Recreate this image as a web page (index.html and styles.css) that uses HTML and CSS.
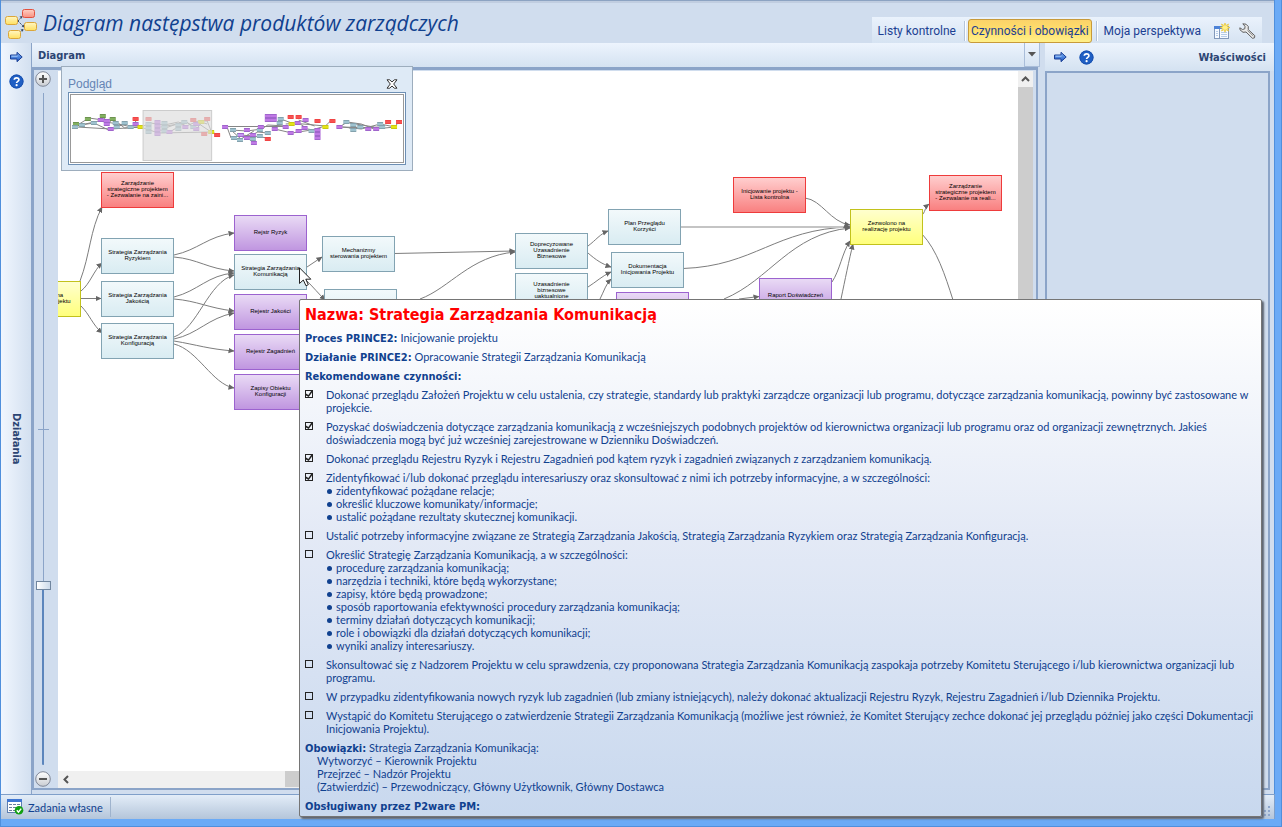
FILE: index.html
```html
<!DOCTYPE html>
<html lang="pl">
<head>
<meta charset="utf-8">
<title>Diagram następstwa produktów zarządczych</title>
<link rel="stylesheet" href="styles.css">
</head>
<body>
<svg class="defs" aria-hidden="true">
  <defs>
    <linearGradient id="gBlue" x1="0" y1="0" x2="0" y2="1"><stop offset="0" stop-color="#7fb2f5"/><stop offset="1" stop-color="#1c57c4"/></linearGradient>
    <linearGradient id="gYellow" x1="0" y1="0" x2="0" y2="1"><stop offset="0" stop-color="#fff6c4"/><stop offset="1" stop-color="#ffe060"/></linearGradient>
    <linearGradient id="gRed" x1="0" y1="0" x2="0" y2="1"><stop offset="0" stop-color="#ffd0c4"/><stop offset="1" stop-color="#f89080"/></linearGradient>
    <linearGradient id="gKnob" x1="0" y1="0" x2="0" y2="1"><stop offset="0" stop-color="#ffffff"/><stop offset="1" stop-color="#c9ccd2"/></linearGradient>
    <marker id="arrow" viewBox="0 0 6 6" refX="5.5" refY="3" markerWidth="6" markerHeight="6" markerUnits="userSpaceOnUse" orient="auto"><path d="M0 0.2L6 3L0 5.8z" fill="#666"/></marker>
    <symbol id="iArrow" viewBox="0 0 15 12"><path d="M1.500 4h6.500V1.300L13.200 6L8 10.700V8H1.500z" fill="url(#gBlue)" stroke="#1a3f94" stroke-width="1"/><path d="M2.500 5.200h6" stroke="#a8cdfb" stroke-width="1"/></symbol>
    <symbol id="iHelp" viewBox="0 0 15 15"><circle cx="7.500" cy="7.500" r="7" fill="#1f5fc4"/><circle cx="7.500" cy="7.500" r="6.500" fill="none" stroke="#1a52b0"/><path d="M5.300 5.800C5.300 3.200 9.900 3.100 9.900 5.700C9.900 7.300 7.600 7.400 7.600 9" fill="none" stroke="#fff" stroke-width="1.700"/><circle cx="7.600" cy="11.200" r="1.100" fill="#fff"/></symbol>
  </defs>
</svg>

<div class="window">
  <header class="header">
    <svg class="logo" viewBox="0 0 34 32" aria-hidden="true">
      <g stroke="#3d4f66" stroke-width="1" fill="#3d4f66"><path d="M13 12L17 7.500M13 12L19 18M14 24L18 20.500" stroke-dasharray="2 1" fill="none"/><path d="M17.500 7l-3 .6 2.400 2.200zM19.500 18.500l-.6-3-2.200 2.200zM18.500 20l-3 .6 2.400 2.200z" stroke="none"/></g>
      <rect x="17.500" y="0.500" width="12" height="8" rx="2" fill="url(#gRed)" stroke="#e2513f"/>
      <rect x="0.500" y="7.500" width="12" height="8" rx="2" fill="url(#gYellow)" stroke="#dba63a"/>
      <rect x="19.500" y="13.500" width="12" height="8" rx="2" fill="url(#gYellow)" stroke="#dba63a"/>
      <rect x="3.500" y="21.500" width="12" height="8" rx="2" fill="url(#gYellow)" stroke="#dba63a"/>
    </svg>
    <h1 class="title">Diagram następstwa produktów zarządczych</h1>
    <nav class="toolbar">
      <button class="tool">Listy kontrolne</button>
      <span class="sep"></span>
      <button class="tool active">Czynności i obowiązki</button>
      <span class="sep"></span>
      <button class="tool">Moja perspektywa</button>
      <button class="tool-icon" aria-label="Nowa perspektywa">
        <svg viewBox="0 0 16 16" width="16" height="16"><rect x="0.500" y="3.500" width="14" height="12" fill="#f6faff" stroke="#8298ba"/><rect x="0" y="3" width="8" height="3" fill="#4d83d8"/><path d="M2 8.500h2M2 10.500h2M2 12.500h2M7 9.500h6M7 11.500h6M7 13.500h6" stroke="#b5cbe8"/><path d="M5.500 6v9" stroke="#8298ba"/><path d="M11 0l.8 2.600L14.500 1 13.400 3.700 16 4.500l-2.600.9L14.500 8 11.800 6.600 11 9.200l-.8-2.600L7.500 8l1.200-2.600L6 4.500l2.700-.8L7.500 1l2.700 1.600z" fill="#fff08a" stroke="#e6c22e" stroke-width=".7"/></svg>
      </button>
      <button class="tool-icon" aria-label="Ustawienia">
        <svg viewBox="0 0 17 16" width="17" height="16"><path d="M3.800 .8L7 1.200 9.300 3.500 9.200 6.500 15.800 12.700 15.500 14.800 13.500 15.300 7 9 4 9.300 1 6.800 .8 4.800 3.500 6.500 5.800 5.800 6 3.300z" fill="#e8e8e8" stroke="#606060" stroke-width="1"/><path d="M8.500 7.500l5.800 5.500" stroke="#8d8d8d"/></svg>
      </button>
    </nav>
  </header>

  <div class="main">
    <aside class="rail">
      <button class="icon-btn" aria-label="Rozwiń"><svg width="15" height="12"><use href="#iArrow"/></svg></button>
      <button class="icon-btn" aria-label="Pomoc"><svg width="15" height="15"><use href="#iHelp"/></svg></button>
      <span class="rail-label">Działania</span>
    </aside>

    <section class="center">
      <div class="pane-head">
        <h2 class="pane-title">Diagram</h2>
        <button class="drop" aria-label="Menu diagramu"><svg width="8" height="5"><path d="M0 0h8L4 4.500z" fill="#555"/></svg></button>
      </div>
      <div class="frame">
        <div class="zoom">
          <button class="knob" aria-label="Powiększ"><svg width="16" height="16"><circle cx="8" cy="8" r="7.300" fill="url(#gKnob)" stroke="#808898"/><path d="M4 8h8M8 4v8" stroke="#555" stroke-width="2"/></svg></button>
          <div class="slider-box"><input class="slider" type="range" min="0" max="1000" value="264" aria-label="Skala"></div>
          <button class="knob" aria-label="Pomniejsz"><svg width="16" height="16"><circle cx="8" cy="8" r="7.300" fill="url(#gKnob)" stroke="#808898"/><path d="M4 8h8" stroke="#555" stroke-width="2"/></svg></button>
        </div>
        <div class="canvas">
          <svg class="edges" aria-hidden="true">
            <g transform="translate(-58 -71)" fill="none" stroke="#7d7d7d">
              <g class="edge">
                <path d="M80 281C90 255 90 230 102 207"/>
                <path d="M81 291C90 284 94 270 102 263"/>
                <path d="M81 298.500H101"/>
                <path d="M81 306C90 315 92 324 102 333"/>
                <path d="M174 255C198 250 208 236 234 233"/>
                <path d="M174 257C198 259 208 269 234 271"/>
                <path d="M174 297C198 291 208 275 234 273"/>
                <path d="M174 299C198 301 208 308 234 311"/>
                <path d="M174 337C198 328 208 282 234 275"/>
                <path d="M174 339C198 334 208 318 234 313"/>
                <path d="M174 341C198 345 208 349 234 351"/>
                <path d="M174 344C198 350 212 384 234 388"/>
                <path d="M307 267L322 257"/>
                <path d="M307 281C314 288 318 293 325 300"/>
                <path d="M394 253.500L515 251"/>
                <path d="M420 299C450 288 470 256 515 252"/>
                <path d="M588 246C596 240 600 234 608 231"/>
                <path d="M588 253C596 260 602 264 611 267"/>
                <path d="M588 287C596 282 602 276 611 272"/>
                <path d="M600 299C604 291 606 284 611 279"/>
                <path d="M681 227H850"/>
                <path d="M683 268.500C755 266 775 229 850 227"/>
                <path d="M805 198C822 200 830 222 850 225"/>
                <path d="M724 299C770 280 790 234 850 228"/>
                <path d="M739 299L759 296.500"/>
                <path d="M832 282C840 270 842 253 850 241"/>
                <path d="M841 299C845 280 849 260 853 244"/>
                <path d="M921 216C926 212 924 208 929 204"/>
              </g>
              <path d="M922 234C937 250 945 275 953 300"/>
              <path d="M681 227H843" stroke="#c4c4c4" stroke-width="2"/>
            </g>
          </svg>
          <div class="node yellow" style="left:-50px;top:210px">Zezwolono na<br>inicjowanie projektu</div>
          <div class="node red" style="left:43px;top:101px">Zarządzanie<br>strategiczne projektem<br>- Zezwalanie na zaini...</div>
          <div class="node blue" style="left:43px;top:167px">Strategia Zarządzania<br>Ryzykiem</div>
          <div class="node blue" style="left:43px;top:210px">Strategia Zarządzania<br>Jakością</div>
          <div class="node blue" style="left:43px;top:252px">Strategia Zarządzania<br>Konfiguracją</div>
          <div class="node violet" style="left:176px;top:144px">Rejstr Ryzyk</div>
          <div class="node blue" style="left:176px;top:183px">Strategia Zarządzania<br>Komunikacją</div>
          <div class="node violet" style="left:176px;top:223px">Rejestr Jakości</div>
          <div class="node violet" style="left:176px;top:263px">Rejestr Zagadnień</div>
          <div class="node violet" style="left:176px;top:303px">Zapisy Obiektu<br>Konfiguracji</div>
          <div class="node blue" style="left:264px;top:165px">Mechanizmy<br>sterowania projektem</div>
          <div class="node blue" style="left:266px;top:218px"></div>
          <div class="node blue" style="left:457px;top:162px">Doprecyzowane<br>Uzasadnienie<br>Biznesowe</div>
          <div class="node blue" style="left:457px;top:202px">Uzasadnienie<br>biznesowe<br>uaktualnione</div>
          <div class="node blue" style="left:550px;top:138px">Plan Przeglądu<br>Korzyści</div>
          <div class="node blue" style="left:553px;top:181px">Dokumentacja<br>Inicjowania Projektu</div>
          <div class="node violet" style="left:558px;top:221px"></div>
          <div class="node red" style="left:675px;top:106px">Inicjowanie projektu -<br>Lista kontrolna</div>
          <div class="node violet" style="left:701px;top:207px">Raport Doświadczeń</div>
          <div class="node yellow" style="left:792px;top:138px">Zezwolono na<br>realizację projektu</div>
          <div class="node red" style="left:871px;top:104px">Zarządzanie<br>strategiczne projektem<br>- Zezwalanie na reali...</div>
          <svg class="cursor" width="13" height="20" viewBox="0 0 13 20" aria-hidden="true"><path d="M.5 .8V16.500L4.300 13L7 18.800L9.300 17.700L6.800 12.200H11.800z" fill="#fff" stroke="#222"/></svg>
        </div>
        <div class="vscroll"><span class="sbtn"><svg width="9" height="6"><path d="M1 5L4.500 1.500L8 5" fill="none" stroke="#555" stroke-width="2"/></svg></span><span class="vthumb"></span></div>
        <div class="hscroll"><span class="sbtn"><svg width="6" height="9"><path d="M5 1L1.500 4.500L5 8" fill="none" stroke="#555" stroke-width="2"/></svg></span><span class="hthumb"></span></div>
      </div>
      <div class="preview">
        <div class="preview-head"><h3 class="preview-title">Podgląd</h3>
          <button class="close" aria-label="Zamknij"><svg width="12" height="10"><path d="M1 .8h2.700L6 3 8.300 .8H11L7.700 5 11 9.200H8.300L6 7 3.700 9.200H1L4.300 5z" fill="#fff" stroke="#333"/></svg></button></div>
        <div class="map">
          <svg viewBox="70 95 334 67" preserveAspectRatio="none" aria-hidden="true">
            <defs>
              <g id="mapNodes" fill="none">
                <path class="mg" d="M72 124h6M84 119h6M99 116h6M109 119h6"/>
                <path class="mb" d="M71 127h6M78 125h6M90 123h6M112 123h6M121 123h6M113 127h6M127 127h6M145 124h6M145 128h6M145 132h6M161 123h6M161 127h6M161 131h6M181 122h6M175 125h6M175 129h6M190 127h6M230 130h6M231 138h6M237 135h6M237 140h6M250 139h6M257 130h6M257 136h6M265 133h6M277 123h6M278 119h6M309 131h6M344 122h6M351 125h6M351 130h6M358 127h6M378 124h6M380 127h6"/>
                <path class="mv" d="M97 120h6M103 124h6M107 129h6M103 121h6M132 124h6M154 122h6M154 126h6M154 130h6M154 134h6M166 132h6M182 127h6M193 129h6M193 124h6M222 127h6M238 135h6M244 130h6M244 138h6M250 135h6M251 143h6M258 127h6M272 129h6M283 127h6M265 116h6M265 120h6M271 116h6M271 120h6M295 123h6M303 120h6M288 133h6M296 131h6M302 128h6M315 130h6M315 134h6M315 138h6M337 127h6M366 129h6M374 129h6"/>
                <path class="mr" d="M132 119h6M145 119h6M190 120h6M204 119h6M201 134h6M214 135h6M288 117h6M296 117h6M315 121h6M330 121h6M265 139h6M386 122h6M397 122h6"/>
                <path class="my" d="M137 127h6M198 122h6M208 132h6M289 124h6M323 127h6M392 127h6"/>
              </g>
            </defs>
            <g fill="none" stroke="#858585">
              <path d="M75 126L88 118L102 120L112 119L124 128L142 127M75 126L98 121L118 124L131 127L142 127M76 127L110 129L142 127M80 125L93 123L108 130L118 127M102 116L108 124L112 117M135 119V124L142 127M110 129L127 123"/>
              <path d="M143 126L150 123L164 125L178 122L186 126L198 121L207 124M143 128L158 133L211 132L196 122M160 127L178 124L186 122L192 126L201 121M158 130L171 131L184 123M165 128L185 121L196 129L203 121L207 121L211 131L217 135"/>
              <path d="M225 126.500H285M227 127L231 138L240 135L254 136L268 138M231 130L247 131L262 129L268 125L286 126M232 131L241 139L254 131M244 139L258 132L268 133M275 129L292 133L312 130L326 126M281 119L292 123L326 126L332 120M286 124L299 123L308 129L320 131M299 120L315 126"/>
              <path d="M340 127L348 122L362 124L375 129L396 127L400 121M343 127L362 129L381 124L396 127M340 127L385 128M350 123L375 127M350 128L381 127"/>
            </g>
            <use class="map-fill" href="#mapNodes"/>
            <use class="map-line" href="#mapNodes"/>
            <rect x="142.500" y="110.500" width="69" height="50" fill="#ddd" fill-opacity=".68" stroke="#ccc"/>
          </svg>
        </div>
      </div>
    </section>

    <aside class="props">
      <div class="props-head">
        <button class="icon-btn" aria-label="Zwiń"><svg width="15" height="12"><use href="#iArrow"/></svg></button>
        <button class="icon-btn" aria-label="Pomoc"><svg width="15" height="15"><use href="#iHelp"/></svg></button>
        <h2 class="props-title">Właściwości</h2>
      </div>
      <div class="props-body"></div>
    </aside>
  </div>

  <footer class="status">
    <button class="task"><svg width="17" height="16" viewBox="0 0 17 16"><rect x="0.500" y="0.500" width="14" height="13" fill="#fff" stroke="#5e7eae"/><rect x="0" y="0" width="15" height="3" fill="#3f76d2"/><path d="M2 5.500h3M6 5.500h3M10 5.500h3M2 8.500h3M6 8.500h3M10 8.500h3M2 11.500h3M6 11.500h3" stroke="#6c7f9e"/><circle cx="12" cy="11.300" r="4.300" fill="#12a012"/><path d="M9.800 11.300l1.700 1.800 2.700-3.500" fill="none" stroke="#fff" stroke-width="1.500"/></svg>Zadania własne</button>
    <svg class="grip" width="9" height="11"><path d="M6 0h2v2H6zM6 4h2v2H6zM2 4h2v2H2zM6 8h2v2H6zM2 8h2v2H2z" fill="#8da6cc"/></svg>
  </footer>
</div>

<article class="tip">
  <h2 class="tip-title">Nazwa: Strategia Zarządzania Komunikacją</h2>
  <p class="line"><b>Proces PRINCE2:</b> Inicjowanie projektu</p>
  <p class="line"><b>Działanie PRINCE2:</b> Opracowanie Strategii Zarządzania Komunikacją</p>
  <p class="line"><b>Rekomendowane czynności:</b></p>
  <ul class="checks">
    <li><input type="checkbox" id="c1" checked><label for="c1">Dokonać przeglądu Założeń Projektu w celu ustalenia, czy strategie, standardy lub praktyki zarządcze organizacji lub programu, dotyczące zarządzania komunikacją, powinny być zastosowane w<br>projekcie.</label></li>
    <li><input type="checkbox" id="c2" checked><label for="c2">Pozyskać doświadczenia dotyczące zarządzania komunikacją z wcześniejszych podobnych projektów od kierownictwa organizacji lub programu oraz od organizacji zewnętrznych. Jakieś<br>doświadczenia mogą być już wcześniej zarejestrowane w Dzienniku Doświadczeń.</label></li>
    <li><input type="checkbox" id="c3" checked><label for="c3">Dokonać przeglądu Rejestru Ryzyk i Rejestru Zagadnień pod kątem ryzyk i zagadnień związanych z zarządzaniem komunikacją.</label></li>
    <li><input type="checkbox" id="c4" checked><div><label for="c4">Zidentyfikować i/lub dokonać przeglądu interesariuszy oraz skonsultować z nimi ich potrzeby informacyjne, a w szczególności:</label>
      <ul class="dots"><li>zidentyfikować pożądane relacje;</li><li>określić kluczowe komunikaty/informacje;</li><li>ustalić pożądane rezultaty skutecznej komunikacji.</li></ul></div></li>
    <li><input type="checkbox" id="c5"><label for="c5">Ustalić potrzeby informacyjne związane ze Strategią Zarządzania Jakością, Strategią Zarządzania Ryzykiem oraz Strategią Zarządzania Konfiguracją.</label></li>
    <li><input type="checkbox" id="c6"><div><label for="c6">Określić Strategię Zarządzania Komunikacją, a w szczególności:</label>
      <ul class="dots"><li>procedurę zarządzania komunikacją;</li><li>narzędzia i techniki, które będą wykorzystane;</li><li>zapisy, które będą prowadzone;</li><li>sposób raportowania efektywności procedury zarządzania komunikacją;</li><li>terminy działań dotyczących komunikacji;</li><li>role i obowiązki dla działań dotyczących komunikacji;</li><li>wyniki analizy interesariuszy.</li></ul></div></li>
    <li><input type="checkbox" id="c7"><label for="c7">Skonsultować się z Nadzorem Projektu w celu sprawdzenia, czy proponowana Strategia Zarządzania Komunikacją zaspokaja potrzeby Komitetu Sterującego i/lub kierownictwa organizacji lub<br>programu.</label></li>
    <li><input type="checkbox" id="c8"><label for="c8">W przypadku zidentyfikowania nowych ryzyk lub zagadnień (lub zmiany istniejących), należy dokonać aktualizacji Rejestru Ryzyk, Rejestru Zagadnień i/lub Dziennika Projektu.</label></li>
    <li><input type="checkbox" id="c9"><label for="c9">Wystąpić do Komitetu Sterującego o zatwierdzenie Strategii Zarządzania Komunikacją (możliwe jest również, że Komitet Sterujący zechce dokonać jej przeglądu później jako części Dokumentacji<br>Inicjowania Projektu).</label></li>
  </ul>
  <div class="duties"><p><b>Obowiązki:</b> Strategia Zarządzania Komunikacją:</p>
    <ul class="roles"><li>Wytworzyć – Kierownik Projektu</li><li>Przejrzeć – Nadzór Projektu</li><li>(Zatwierdzić) – Przewodniczący, Główny Użytkownik, Główny Dostawca</li></ul></div>
  <p class="line"><b>Obsługiwany przez P2ware PM:</b></p>
</article>
</body>
</html>
```
FILE: styles.css
```css
* { box-sizing: border-box; }
body, h1, h2, h3, p, ul { margin: 0; padding: 0; }
ul { list-style: none; }
button { margin: 0; padding: 0; border: 0; background: none; font: inherit; color: inherit; }
svg { display: block; }
.defs { position: absolute; width: 0; height: 0; }

body {
  height: 100vh;
  overflow: hidden;
  position: relative;
  background: #6aaaf6;
  font: 11px/13px Lato, "Noto Sans", sans-serif;
  color: #10418f;
}
.window {
  height: 100vh;
  display: flex;
  flex-direction: column;
  border: solid #4f8fdc;
  border-width: 0 1px 1px;
  padding: 0 6px 7px 0;
}

/* header */
.header {
  flex: none;
  height: 43px;
  display: flex;
  align-items: center;
  gap: 4px;
  padding: 3px 12px 0 4px;
  background: #d0ddee;
  border-right: 1px solid #4f8fdc;
  box-shadow: inset 0 1px #8ca3c2, inset 0 3px #c0cde0;
}
.logo { width: 34px; height: 32px; margin-top: 3px; }
.title { flex: 1; font: italic 21px/28px "Open Sans", sans-serif; color: #10418f; }
.toolbar {
  align-self: flex-end;
  display: flex;
  align-items: center;
  height: 26px;
  padding: 1px 6px 0 2px;
  background: linear-gradient(#eaf2fc, #d6e3f2);
  font: 12px/16px Roboto, sans-serif;
  color: #1c3f92;
}
.tool { height: 24px; padding: 0 4px; }
.tool.active {
  padding: 0 2px;
  border: 1px solid #c79a3b;
  border-radius: 3px;
  background: linear-gradient(#fbd269, #ffe06c 50%, #fff08a);
}
.sep { width: 2px; height: 20px; margin: 0 2px 0 4px; background: linear-gradient(90deg, #b4c4da 50%, #fff 50%); }
.tool-icon { margin-left: 9px; }

/* main area */
.main { flex: 1; min-height: 0; display: flex; background: #d0ddee; border-right: 1px solid #4f8fdc; }
.rail {
  flex: none;
  width: 31px;
  display: flex;
  flex-direction: column;
  align-items: center;
  gap: 11px;
  padding-top: 8px;
  background: linear-gradient(90deg, #f0f6fe, #d3e0f0);
  border-right: 1px solid #8ba4c8;
}
.icon-btn { display: flex; align-items: center; }
.rail-label { margin: auto 0; padding-bottom: 32px; padding-top: 16px; writing-mode: vertical-rl; font: bold 11px/14px "DejaVu Sans Condensed", sans-serif; color: #2c4573; }
.center { flex: 1; min-width: 0; position: relative; display: flex; flex-direction: column; padding-bottom: 4px; }
.pane-head {
  flex: none;
  height: 24px;
  display: flex;
  align-items: center;
  justify-content: space-between;
  padding-left: 6px;
  background: linear-gradient(#edf4fd, #d4e2f1);
}
.pane-title, .props-title { padding-top: 1px; font: bold 11px/14px "DejaVu Sans Condensed", sans-serif; color: #2c4573; }
.drop { align-self: stretch; width: 16px; display: grid; place-items: center; border: solid #a9bdd9; border-width: 0 1px 1px; }
.frame {
  flex: 1;
  min-height: 0;
  margin-right: 2px;
  display: grid;
  grid-template: 1fr 17px / 24px 1fr 15px;
  border: 2px solid #8ba4c8;
  border-top-width: 3px;
  padding: 1px 3px 0 0;
}
.zoom { grid-row: 1 / 3; display: flex; flex-direction: column; align-items: center; gap: 6px; padding: 0 6px 1px 0; }
.knob { flex: none; }
.slider-box { flex: 1; min-height: 0; display: flex; }
.slider {
  writing-mode: vertical-lr;
  direction: rtl;
  appearance: none;
  width: 15px;
  height: 100%;
  margin: 0;
  background:
    linear-gradient(#8ba4c8, #8ba4c8) center / 11px 1px no-repeat,
    linear-gradient(#5c86bd, #5c86bd) bottom / 2px 26% no-repeat,
    linear-gradient(#8ba4c8, #8ba4c8) center / 1px 100% no-repeat;
}
.slider::-webkit-slider-thumb { appearance: none; width: 15px; height: 9px; background: linear-gradient(90deg, #fff, #ccdaea); border: 1px solid #71869f; }
.canvas { position: relative; overflow: hidden; background: #fff; }
.edges { width: 100%; height: 100%; }
.edge path { marker-end: url(#arrow); }
.node {
  position: absolute;
  width: 73px;
  height: 36px;
  display: grid;
  place-content: center;
  padding-bottom: 2px;
  border: 1px solid;
  font: 6px/6px "Liberation Sans", sans-serif;
  text-align: center;
  white-space: nowrap;
  color: #000;
}
.blue { border-color: #82a3b2; background: linear-gradient(#f2f9fb, #d9ecf2); }
.violet { border-color: #9c63cf; background: linear-gradient(#e9daf5, #c096e0); }
.red { border-color: #ee3b3b; background: linear-gradient(#ffcece, #f98080); }
.yellow { border-color: #c2c21c; background: linear-gradient(#ffffce, #ffff7c); }
.cursor { position: absolute; left: 241px; top: 196px; }
.vscroll, .hscroll { display: flex; background: #f0f0f0; }
.vscroll { flex-direction: column; }
.hscroll { grid-column: 2 / 4; }
.sbtn { flex: none; width: 15px; height: 16px; display: grid; place-items: center; }
.vthumb { height: 75%; background: #cdcdcd; }
.hthumb { width: 40%; margin: 0 0 1px 212px; background: #cdcdcd; }

/* overview window */
.preview { position: absolute; left: 29px; top: 23px; width: 352px; height: 105px; display: flex; flex-direction: column; padding: 8px 6px 5px; background: #deeaf6; border: 1px solid #9dadbd; }
.preview-head { display: flex; align-items: center; justify-content: space-between; height: 17px; padding-right: 8px; }
.preview-title { font: 12px/16px "Liberation Sans", sans-serif; color: #6584b4; }
.map { flex: 1; min-height: 0; border: 1px solid #6d8fb4; padding: 1px; background: #fff; }
.map svg { width: 100%; height: 100%; border: 1px solid #999; background: #fff; }
.mg { stroke: #6d9350; }
.mb { stroke: #84a2ad; }
.mv { stroke: #a065cc; }
.mr { stroke: #f04444; }
.my { stroke: #c9c912; }
.map-fill { stroke-width: 4px; }
.map-line { stroke-width: 1px; filter: brightness(1.4); }

/* properties */
.props { flex: none; width: 229px; display: flex; flex-direction: column; margin-left: 5px; padding-bottom: 4px; }
.props-head { flex: none; height: 28px; display: flex; align-items: center; gap: 11px; padding: 0 8px; background: linear-gradient(#edf4fd, #d4e2f1); }
.props-title { margin-left: auto; }
.props-body { flex: 1; margin-right: 4px; border: 2px solid #8ba4c8; }

/* status bar */
.status {
  flex: none;
  height: 25px;
  display: flex;
  align-items: center;
  justify-content: space-between;
  padding: 0 3px 0 6px;
  background: linear-gradient(#e3edf8, #b4c5da);
  border: solid #7f9fc9;
  border-width: 1px 1px 0 0;
}
.task { display: flex; align-items: center; gap: 4px; height: 20px; padding-right: 7px; border-right: 1px solid #9fb3cd; }
.grip { align-self: flex-end; margin-bottom: 2px; }

/* tooltip */
.tip {
  position: absolute;
  left: 299px;
  right: 20px;
  top: 299px;
  display: flex;
  flex-direction: column;
  gap: 6px;
  padding: 5px 5px 4px;
  border: 1px solid #757575;
  border-radius: 2px;
  background: linear-gradient(#fff, #e4eaf6 45%, #c8d8ee);
  box-shadow: 2px 2px 2px #5c6470;
  white-space: nowrap;
}
.tip-title { font: bold 16px/20px "DejaVu Sans Condensed", sans-serif; color: #f00; }
.tip b { font-family: "DejaVu Sans Condensed", sans-serif; line-height: 0; }
.checks { display: flex; flex-direction: column; gap: 6px; }
.checks > li { display: flex; align-items: flex-start; gap: 13px; }
.checks label { display: block; }
.checks input { appearance: none; flex: none; width: 8px; height: 8px; margin: 2px 0 0; border: 1px solid #222; }
.checks input:checked::before { content: ""; display: block; width: 6px; height: 6px; background: #222; clip-path: polygon(0 40%, 40% 65%, 85% 0, 100% 0, 100% 25%, 45% 100%, 0 75%); }
.dots { padding-left: 10px; }
.dots li { position: relative; }
.dots li::before { content: ""; position: absolute; left: -9px; top: 5px; width: 5px; height: 5px; border-radius: 50%; background: #10418f; }
.roles { padding-left: 12px; }
```
